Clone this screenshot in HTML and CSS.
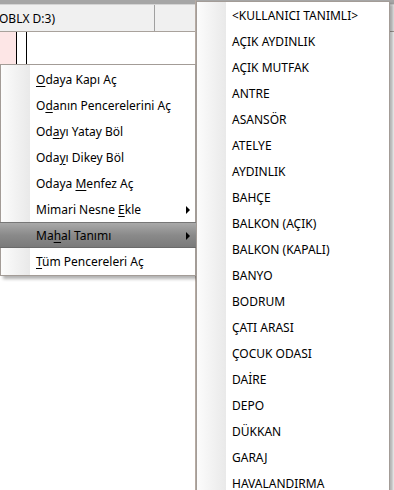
FILE: index.html
```html
<!DOCTYPE html>
<html lang="tr">
<head>
  <meta charset="UTF-8" />
  <title>Mahal Tanımı</title>
  <link rel="stylesheet" href="styles.css">
</head>
<body>

<!-- Background window -->
<div class="app">
  <div class="pane pane-left">
    <div class="top-strip"></div>
    <div class="col-head">
      <div class="col col-first"><span class="col-text">OBLX D:3)</span></div>
      <div class="col col-rest"></div>
    </div>
    <div class="grid-row">
      <div class="cell cell-pink"></div>
      <div class="cell cell-narrow"></div>
      <div class="cell cell-wide"></div>
    </div>
  </div>
  <div class="pane pane-right">
    <div class="top-strip"></div>
    <div class="col-head"></div>
  </div>
</div>

<!-- Context menu -->
<div class="menu main-menu">
  <div class="item"><u>O</u>daya Kapı Aç</div>
  <div class="item">O<u>d</u>anın Pencerelerini Aç</div>
  <div class="item">Od<u>a</u>yı Yatay Böl</div>
  <div class="item">Oda<u>y</u>ı Dikey Böl</div>
  <div class="item">Odaya <u>M</u>enfez Aç</div>
  <div class="item has-sub">Mimari Nesne <u>E</u>kle<span class="arrow"></span></div>
  <div class="item has-sub selected">Ma<u>h</u>al Tanımı<span class="arrow"></span></div>
  <div class="item"><u>T</u>üm Pencereleri Aç</div>
</div>

<!-- Sub menu -->
<div class="menu sub-menu">
  <div class="item">&lt;KULLANICI TANIMLI&gt;</div>
  <div class="item">AÇIK AYDINLIK</div>
  <div class="item">AÇIK MUTFAK</div>
  <div class="item">ANTRE</div>
  <div class="item">ASANSÖR</div>
  <div class="item">ATELYE</div>
  <div class="item">AYDINLIK</div>
  <div class="item">BAHÇE</div>
  <div class="item">BALKON (AÇIK)</div>
  <div class="item">BALKON (KAPALI)</div>
  <div class="item">BANYO</div>
  <div class="item">BODRUM</div>
  <div class="item">ÇATI ARASI</div>
  <div class="item">ÇOCUK ODASI</div>
  <div class="item">DAİRE</div>
  <div class="item">DEPO</div>
  <div class="item">DÜKKAN</div>
  <div class="item">GARAJ</div>
  <div class="item">HAVALANDIRMA</div>
</div>

</body>
</html>
```

FILE: styles.css
```css
body {
  margin: 0;
  width: 394px;
  height: 490px;
  overflow: hidden;
  background: white;
  font-family: "Noto Sans", "Open Sans", sans-serif;
  font-size: 12px;
  color: #000;
  position: relative;
}

.app {
  display: flex;
  height: 100%;
}

.pane-left {
  width: 195px;
  border-right: 1px solid #b5aaa2;
}

.pane-right {
  flex-grow: 1;
}

.top-strip {
  height: 4px;
  background-color: #a6a6a6;
  border-bottom: 1px solid #d4d4d4;
}

.col-head {
  display: flex;
  height: 26px;
  background-color: #f0f0f0;
  border-bottom: 1px solid #a9a29c;
}

.col {
  display: flex;
  align-items: center;
  overflow: hidden;
  white-space: nowrap;
}

.col-first {
  width: 154px;
  border-right: 1px solid #a0a0a0;
}

.col-text {
  margin-left: -1px;
}

.col-rest {
  flex-grow: 1;
}

.grid-row {
  display: flex;
  height: 32px;
}

.cell-pink {
  width: 16px;
  background-color: #fde6e6;
  border-right: 1px solid #000;
}

.cell-narrow {
  width: 9px;
  border-right: 1px solid #000;
}

.cell-wide {
  flex-grow: 1;
}

/* Menus */
.menu {
  position: absolute;
  background: white;
  border: 1px solid #a39c97;
  box-shadow: 3px 3px 3px rgba(0, 0, 0, 0.3);
  background-image: linear-gradient(to right, #fcfcfc 0, #e9e9e9 29px, #ffffff 29px);
  padding: 1px 0;
}

.main-menu {
  left: 0;
  top: 64px;
  width: 194px;
}

.sub-menu {
  left: 196px;
  top: 1px;
  bottom: 0;
  width: 192px;
  padding: 0;
  border-bottom: none;
  overflow: hidden;
}

.item {
  position: relative;
  height: 24px;
  line-height: 24px;
  padding-top: 2px;
  padding-left: 35px;
  white-space: nowrap;
}

.item u {
  text-decoration-thickness: 1px;
  text-underline-offset: 2px;
}

.item.selected {
  margin: 0 -1px;
  padding-left: 36px;
  padding-top: 1px;
  height: 23px;
  line-height: 23px;
  border-top: 1px solid #777;
  border-bottom: 1px solid #6a6a6a;
  background: linear-gradient(#a9a9a9, #8a8a8a 50%, #7a7a7a);
}

.arrow {
  position: absolute;
  right: 5px;
  top: 50%;
  margin-top: -3px;
  width: 0;
  height: 0;
  border-top: 4px solid transparent;
  border-bottom: 4px solid transparent;
  border-left: 4px solid #000;
}

.item.selected .arrow {
  right: 6px;
}
```
